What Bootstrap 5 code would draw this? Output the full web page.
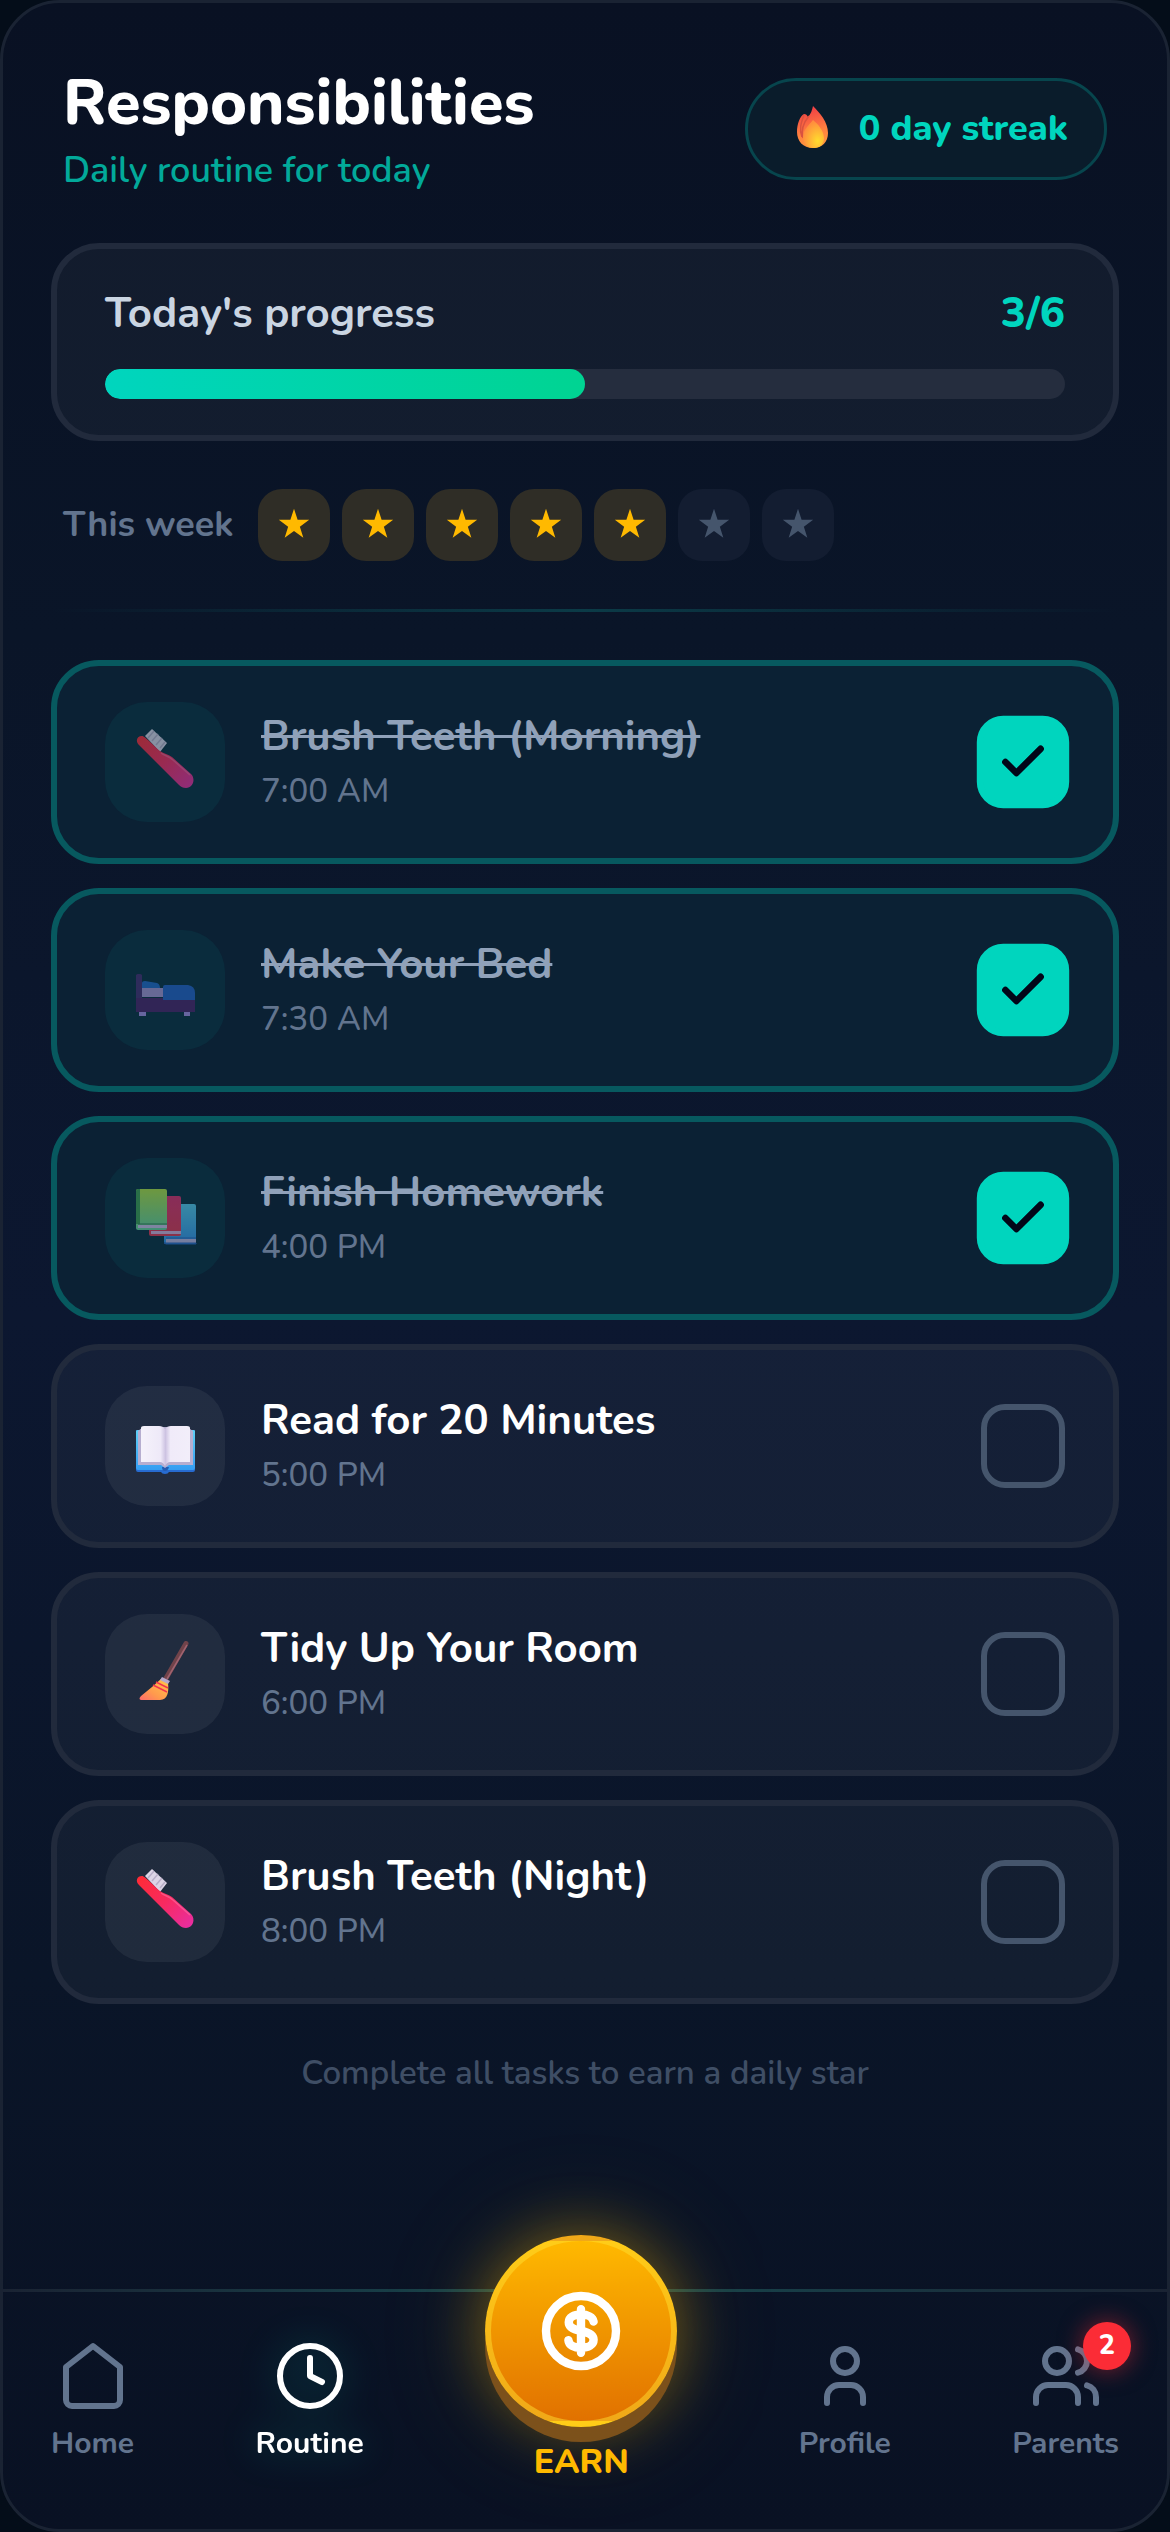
<!DOCTYPE html>
<html lang="en" data-bs-theme="dark">
<head>
<meta charset="utf-8">
<meta name="viewport" content="width=device-width, initial-scale=1">
<title>Responsibilities</title>
<link href="https://cdn.jsdelivr.net/npm/bootstrap@5.3.0/dist/css/bootstrap.min.css" rel="stylesheet">
<style>
  :root { --teal: #00d5be; --amber: #ffb900; --slate: #62748e; }
  body { background: #040d19; font-family: Nunito, "Open Sans", "Noto Sans", sans-serif; color: #fff; }
  .phone { min-height: 100vh; border: 3px solid #1a2333; border-radius: 60px; background: linear-gradient(180deg, #091123 0%, #0a1528 25%, #0c1730 52%, #0a1528 78%, #091123 100%); }
  .screen { padding: 66px 48px 0; }
  .head { padding: 0 12px; margin-bottom: 45px; }
  h1 { font-size: 63px; line-height: 69px; font-weight: 800; }
  .sub { font-size: 36px; line-height: 54px; font-weight: 600; color: #02a99a; margin-top: 6px; }
  .streak { border: 3px solid #07454d; border-radius: 51px; background: #0a1c2b; height: 102px; padding: 0 36px; gap: 24px; margin-top: 9px; color: var(--teal); font-size: 36px; font-weight: 800; }
  .panel { border: 6px solid #212a3c; border-radius: 48px; background: rgba(255,255,255,.04); }
  .today { padding: 36px 48px; margin-bottom: 48px; }
  .today-row { font-size: 42px; line-height: 57px; margin-bottom: 27px; color: #cad5e2; font-weight: 700; }
  .today-row strong { color: var(--teal); font-weight: 800; }
  .progress { height: 30px; border-radius: 15px; background: #252d3e; }
  .progress-bar { border-radius: 15px; background: linear-gradient(90deg, #00d5be, #00d492); }
  .week { padding: 0 12px; gap: 24px; font-size: 36px; font-weight: 700; color: var(--slate); }
  .stars { gap: 12px; }
  .star { width: 72px; height: 72px; padding-bottom: 3px; border-radius: 24px; background: #131d31; color: #45556c; }
  .star.won { background: #2f2d26; color: var(--amber); }
  .rule { height: 3px; margin: 48px 0; background: linear-gradient(90deg, transparent, #0b3b47, transparent); }
  .tasks { gap: 24px; }
  .task { padding: 36px 48px; gap: 36px; min-height: 204px; cursor: pointer; }
  .task.done { border-color: #07595f; background: #0b2134; }
  .tile { width: 120px; height: 120px; border-radius: 42px; background: rgba(255,255,255,.06); }
  .done .tile { background: #0a2c3d; }
  .done .tile svg { opacity: .6; }
  .task-name { font-size: 42px; line-height: 57px; margin-bottom: 3px; font-weight: 700; }
  .done .task-name { color: #90a1b9; text-decoration: line-through; text-decoration-thickness: 3px; }
  .task-time { font-size: 33px; line-height: 48px; font-weight: 500; color: var(--slate); }
  .form-check-input.tick { width: 84px; height: 84px; margin: 0; border: 6px solid #45556c; border-radius: 24px; background-color: transparent; }
  .form-check-input.tick:checked { transform: scale(1.1); border-color: var(--teal); background-color: var(--teal); background-size: 48px 48px; background-image: url("data:image/svg+xml,%3Csvg xmlns='http://www.w3.org/2000/svg' viewBox='0 0 24 24' fill='none' stroke='%23020618' stroke-width='3' stroke-linecap='round' stroke-linejoin='round'%3E%3Cpath d='M20 6 9 17l-5-5'/%3E%3C/svg%3E"); }
  .hint { font-size: 33px; line-height: 48px; margin: 46px 0; font-weight: 600; color: #3f4e65; }
  .tabs { height: 240px; padding: 48px 48px 0; border-top: 3px solid; border-image: linear-gradient(90deg, #1a2333, #164a50 50%, #1a2333) 1; }
  .tab { color: var(--slate); font-size: 30px; line-height: 40px; font-weight: 700; text-decoration: none; gap: 12px; }
  .tab.on { color: #fff; filter: drop-shadow(0 0 18px rgba(0,213,190,.3)); }
  .tab svg, .coin svg { fill: none; stroke: currentColor; stroke-width: 2; stroke-linecap: round; stroke-linejoin: round; }
  .bubble { position: absolute; top: -18px; right: -12px; width: 48px; height: 48px; background: #fb2c36; color: #fff; font-size: 27px; line-height: 48px; font-weight: 800; box-shadow: 0 0 24px rgba(251,44,54,.5); }
  .earn { margin-top: -105px; gap: 15px; color: var(--amber); font-size: 34px; line-height: 40px; font-weight: 800; background: none; border: 0; padding: 0; }
  .coin { width: 192px; height: 192px; color: #fff; border: 6px solid rgba(255,223,48,.5); background: linear-gradient(180deg, #ffb900, #e17100); box-shadow: 0 15px 0 #7c511b, 0 0 60px rgba(255,185,0,.4), 0 0 120px rgba(255,185,0,.15); }
  .coin svg { stroke-width: 2.4; }
</style>
</head>
<body>
<svg width="0" height="0" class="position-absolute" aria-hidden="true">
  <defs>
    <linearGradient id="gBrush" x1="0" y1="0" x2="1" y2="1"><stop offset="0" stop-color="#ff2b33"/><stop offset=".5" stop-color="#f82a60"/><stop offset="1" stop-color="#e82ea6"/></linearGradient>
    <linearGradient id="gFlame" x1=".4" y1="0" x2=".6" y2="1"><stop offset="0" stop-color="#f03a45"/><stop offset=".6" stop-color="#ff8040"/><stop offset="1" stop-color="#ff9a3c"/></linearGradient>
    <radialGradient id="gCore" cx=".7" cy=".75" r=".7"><stop offset="0" stop-color="#ffdc2e"/><stop offset="1" stop-color="#ff8f3d"/></radialGradient>
    <linearGradient id="gGreen" x1="0" y1="0" x2="0" y2="1"><stop offset="0" stop-color="#b0e042"/><stop offset="1" stop-color="#66cf9a"/></linearGradient>
    <linearGradient id="gRed" x1="0" y1="0" x2="0" y2="1"><stop offset="0" stop-color="#dd2e6c"/><stop offset="1" stop-color="#e23550"/></linearGradient>
    <linearGradient id="gBlue" x1="0" y1="0" x2="0" y2="1"><stop offset="0" stop-color="#57c8ea"/><stop offset="1" stop-color="#3491e8"/></linearGradient>
    <linearGradient id="gStraw" x1="1" y1="0" x2="0" y2="1"><stop offset="0" stop-color="#ffc94a"/><stop offset=".6" stop-color="#ff9a4d"/><stop offset="1" stop-color="#ff6b6b"/></linearGradient>
    <linearGradient id="gCover" x1="0" y1="0" x2="0" y2="1"><stop offset="0" stop-color="#5fd0f5"/><stop offset="1" stop-color="#349df2"/></linearGradient>
    <linearGradient id="gPage" x1="0" y1="0" x2="1" y2="0"><stop offset="0" stop-color="#f5f2fb"/><stop offset=".4" stop-color="#eee9f8"/><stop offset=".5" stop-color="#cdc3e2"/><stop offset=".6" stop-color="#f0ebf9"/><stop offset="1" stop-color="#f2eefa"/></linearGradient>
    <symbol id="star" viewBox="0 0 24 24"><path fill="currentColor" d="M12 .6l2.700 8.300h8.700l-7 5.100 2.600 8.300-7-5.100-7 5.100L7.600 14l-7-5.100h8.700z"/></symbol>
    <symbol id="toothbrush" viewBox="0 0 66 66">
      <path d="M13 7 20 0l15 14-7 9z" fill="#ddd5e6"/>
      <path d="M16 9l6-7M20 12l6-7M24 16l6-7M28 19l5-6" stroke="#b9afc8" stroke-width="1.500"/>
      <path d="M10 7c3 0 13 11 18 15 4 3 8 3 12 6l19 17c5 5 2 14-5 14-3 0-5-1-7-3L7 16C3 12 5 7 10 7z" fill="url(#gBrush)"/>
      <path d="M29 24c4 3 8 3 12 7l17 15" fill="none" stroke="#ff6fa0" stroke-width="1.500" opacity=".6"/>
    </symbol>
    <symbol id="bed" viewBox="0 0 66 66">
      <path d="M7 54h7v5H7zM52 54h6v5h-6z" fill="#a58be0"/>
      <path d="M4 19q0-2 3-2t3 2v22h53v14H4z" fill="#4c2168"/>
      <path d="M4 19q0-2 3-2t3 2v22H4z" fill="#472d70"/>
      <path d="M10 31h22v9H10z" fill="#a592d0"/>
      <path d="M10 31v-5q0-2 3-2l12 2q3 1 3 5z" fill="#2267c4"/>
      <path d="M31 30q0-2 2-2h23q7 1 7 8v7H31z" fill="#245fc2"/>
    </symbol>
    <symbol id="books" viewBox="0 0 66 66">
      <rect x="32" y="19" width="32" height="40" rx="2" fill="url(#gBlue)"/><path d="M34 54h30v4H34z" fill="#bfb5e0"/><path d="M32 58h32v1H34zM34 53h30" stroke="#2b62bd" fill="none"/>
      <rect x="17" y="11" width="32" height="40" rx="2" fill="url(#gRed)"/><path d="M19 46h30v3H19z" fill="#d6b0dc"/>
      <rect x="4" y="4" width="31" height="41" rx="2" fill="url(#gGreen)"/><path d="M4 6q0-2 2-2h2v35H4z" fill="#3f9c50"/><path d="M6 40h29v3H6z" fill="#cbbfe4"/><path d="M6 39h29" stroke="#347d53"/>
    </symbol>
    <symbol id="openbook" viewBox="0 0 66 66">
      <path d="M4 18q0-1 2-1h55q2 0 2 1v39q0 2-2 2H37q-1 2-4 2t-4-2H6q-2 0-2-2z" fill="#276bd0"/>
      <path d="M4 18q0-1 2-1h55q2 0 2 1v37q0 2-2 2H6q-2 0-2-2z" fill="url(#gCover)"/>
      <path d="M30 54h7q-1 4-4 4t-3-4z" fill="#245cb2"/>
      <path d="M6 18l5-4h44l6 4v34H37l-4 3-4-3H6z" fill="#b6aed0"/>
      <path d="M9 15q0-2 3-2h15q4 0 6 3 2-3 6-3h16q3 0 3 2v34H38q-3 0-5 4-2-4-5-4H9z" fill="url(#gPage)"/>
    </symbol>
    <symbol id="broom" viewBox="0 0 66 66">
      <path d="M54 2.500 33 39" stroke="#71434a" stroke-width="5" stroke-linecap="round"/><path d="M55 4 35 38" stroke="#a06370" stroke-width="1.500"/>
      <path d="M29 38q5 0 7 4c1 8 0 17-8 17H9q-3-1 0-4l11-9z" fill="url(#gStraw)"/>
      <path d="M30 36l8 4-2 3-8-4z" fill="#b6a9cc"/>
      <path d="M24 41l12 6M21 44l14 7" stroke="#f0364e" stroke-width="1.500"/>
    </symbol>
  </defs>
</svg>

<div class="phone d-flex flex-column">
  <main class="screen">
    <header class="head d-flex justify-content-between align-items-start">
      <div>
        <h1 class="m-0">Responsibilities</h1>
        <p class="sub mb-0">Daily routine for today</p>
      </div>
      <div class="streak d-flex align-items-center">
        <svg width="51" height="48" viewBox="0 0 51 48" aria-hidden="true">
          <path d="M29 1c7 7 15 16 15 27 0 9-6 15-15 15-10 0-16-7-16-16 0-8 3-16 7-18 2 0 3 1 4 3 3-3 4-7 5-11z" fill="url(#gFlame)"/>
          <path d="M20 10c-3 8-5 14-2 22M25 11c-6 7-8 14-6 22" fill="none" stroke="#d9523f" stroke-width="1.500"/>
          <path d="M29 15c5 4 11 11 11 18 0 6-4 10-10 10-7 0-11-5-11-11 0-7 6-12 10-17z" fill="url(#gCore)"/>
        </svg>
        <span>0 day streak</span>
      </div>
    </header>

    <section class="panel today">
      <div class="today-row d-flex justify-content-between"><span>Today's progress</span><strong>3/6</strong></div>
      <div class="progress" role="progressbar" aria-label="Today's progress" aria-valuenow="3" aria-valuemin="0" aria-valuemax="6"><div class="progress-bar" style="width:50%"></div></div>
    </section>

    <section class="week d-flex align-items-center">
      <span>This week</span>
      <div class="stars d-flex">
        <span class="star won d-flex align-items-center justify-content-center"><svg width="32" height="32"><use href="#star"/></svg></span>
        <span class="star won d-flex align-items-center justify-content-center"><svg width="32" height="32"><use href="#star"/></svg></span>
        <span class="star won d-flex align-items-center justify-content-center"><svg width="32" height="32"><use href="#star"/></svg></span>
        <span class="star won d-flex align-items-center justify-content-center"><svg width="32" height="32"><use href="#star"/></svg></span>
        <span class="star won d-flex align-items-center justify-content-center"><svg width="32" height="32"><use href="#star"/></svg></span>
        <span class="star d-flex align-items-center justify-content-center"><svg width="32" height="32"><use href="#star"/></svg></span>
        <span class="star d-flex align-items-center justify-content-center"><svg width="32" height="32"><use href="#star"/></svg></span>
      </div>
    </section>

    <div class="rule"></div>

    <section class="tasks d-flex flex-column">
      <label class="task panel done d-flex align-items-center" for="t1">
        <span class="tile d-flex align-items-center justify-content-center"><svg width="66" height="66"><use href="#toothbrush"/></svg></span>
        <span class="flex-grow-1"><span class="task-name d-block">Brush Teeth (Morning)</span><span class="task-time d-block">7:00 AM</span></span>
        <input class="form-check-input tick" type="checkbox" id="t1" checked>
      </label>
      <label class="task panel done d-flex align-items-center" for="t2">
        <span class="tile d-flex align-items-center justify-content-center"><svg width="66" height="66"><use href="#bed"/></svg></span>
        <span class="flex-grow-1"><span class="task-name d-block">Make Your Bed</span><span class="task-time d-block">7:30 AM</span></span>
        <input class="form-check-input tick" type="checkbox" id="t2" checked>
      </label>
      <label class="task panel done d-flex align-items-center" for="t3">
        <span class="tile d-flex align-items-center justify-content-center"><svg width="66" height="66"><use href="#books"/></svg></span>
        <span class="flex-grow-1"><span class="task-name d-block">Finish Homework</span><span class="task-time d-block">4:00 PM</span></span>
        <input class="form-check-input tick" type="checkbox" id="t3" checked>
      </label>
      <label class="task panel d-flex align-items-center" for="t4">
        <span class="tile d-flex align-items-center justify-content-center"><svg width="66" height="66"><use href="#openbook"/></svg></span>
        <span class="flex-grow-1"><span class="task-name d-block">Read for 20 Minutes</span><span class="task-time d-block">5:00 PM</span></span>
        <input class="form-check-input tick" type="checkbox" id="t4">
      </label>
      <label class="task panel d-flex align-items-center" for="t5">
        <span class="tile d-flex align-items-center justify-content-center"><svg width="66" height="66"><use href="#broom"/></svg></span>
        <span class="flex-grow-1"><span class="task-name d-block">Tidy Up Your Room</span><span class="task-time d-block">6:00 PM</span></span>
        <input class="form-check-input tick" type="checkbox" id="t5">
      </label>
      <label class="task panel d-flex align-items-center" for="t6">
        <span class="tile d-flex align-items-center justify-content-center"><svg width="66" height="66"><use href="#toothbrush"/></svg></span>
        <span class="flex-grow-1"><span class="task-name d-block">Brush Teeth (Night)</span><span class="task-time d-block">8:00 PM</span></span>
        <input class="form-check-input tick" type="checkbox" id="t6">
      </label>
    </section>

    <p class="hint text-center">Complete all tasks to earn a daily star</p>
  </main>

  <nav class="tabs mt-auto d-flex justify-content-between align-items-start" aria-label="Main">
    <a class="tab d-flex flex-column align-items-center" href="#home">
      <svg width="72" height="72" viewBox="0 0 24 24"><path d="M3 9l9-7 9 7v11a2 2 0 0 1-2 2H5a2 2 0 0 1-2-2z"/></svg>
      <span>Home</span>
    </a>
    <a class="tab on d-flex flex-column align-items-center" href="#routine" aria-current="page">
      <svg width="72" height="72" viewBox="0 0 24 24"><circle cx="12" cy="12" r="10"/><path d="M12 6v6l4 2"/></svg>
      <span>Routine</span>
    </a>
    <button class="earn d-flex flex-column align-items-center" type="button">
      <span class="coin rounded-circle d-flex align-items-center justify-content-center"><svg width="84" height="84" viewBox="0 0 24 24"><circle cx="12" cy="12" r="10"/><path d="M15.600 9.300C15.400 8 13.900 7.300 12 7.300c-2.100 0-3.500.8-3.500 2.200 0 1.500 1.400 2.100 3.500 2.500s3.600 1 3.600 2.500-1.500 2.300-3.600 2.300c-2 0-3.500-.8-3.600-2.200M12 5.800v12.400"/></svg></span>
      <span>EARN</span>
    </button>
    <a class="tab d-flex flex-column align-items-center" href="#profile">
      <svg width="72" height="72" viewBox="0 0 24 24"><path d="M18 21v-2a4 4 0 0 0-4-4h-4a4 4 0 0 0-4 4v2"/><circle cx="12" cy="7" r="4"/></svg>
      <span>Profile</span>
    </a>
    <a class="tab position-relative d-flex flex-column align-items-center" href="#parents">
      <svg width="72" height="72" viewBox="0 0 24 24"><path d="M16 21v-2a4 4 0 0 0-4-4H6a4 4 0 0 0-4 4v2"/><circle cx="9" cy="7" r="4"/><path d="M22 21v-2a4 4 0 0 0-3-3.870M16 3.130a4 4 0 0 1 0 7.750"/></svg>
      <span>Parents</span>
      <span class="bubble rounded-circle text-center">2</span>
    </a>
  </nav>
</div>
<script src="https://cdn.jsdelivr.net/npm/bootstrap@5.3.0/dist/js/bootstrap.bundle.min.js"></script>
</body>
</html>
